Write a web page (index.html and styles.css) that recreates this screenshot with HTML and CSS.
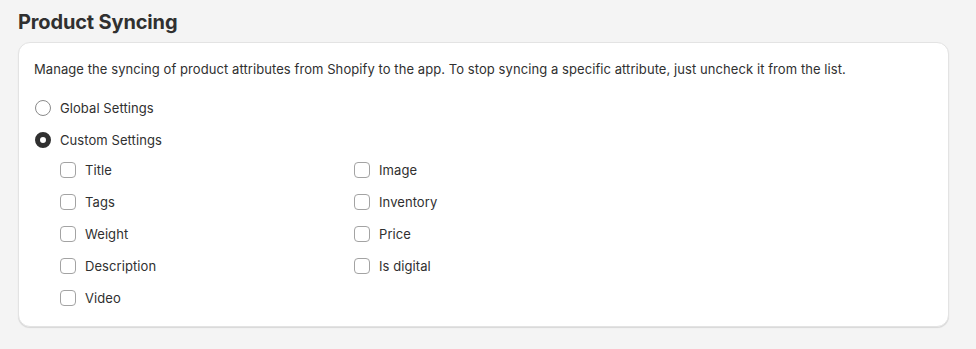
FILE: index.html
```html
<!DOCTYPE html>
<html lang="en">
<head>
    <meta charset="UTF-8">
    <meta name="viewport" content="width=device-width, initial-scale=1.0">
    <title>Product Syncing</title>
    <link rel="stylesheet" href="styles.css">
</head>
<body>
    <div class="page">
        <h2>Product Syncing</h2>
        <div class="card">
            <p class="intro">Manage the syncing of product attributes from Shopify to the app. To stop syncing a specific attribute, just uncheck it from the list.</p>
            <div class="choices">
                <label class="choice">
                    <input type="radio" name="mode" value="global">
                    <span>Global Settings</span>
                </label>
                <div class="custom">
                    <label class="choice">
                        <input type="radio" name="mode" value="custom" checked>
                        <span>Custom Settings</span>
                    </label>
                    <div class="attributes">
                        <label class="choice"><input type="checkbox" name="title"><span>Title</span></label>
                        <label class="choice"><input type="checkbox" name="image"><span>Image</span></label>
                        <label class="choice"><input type="checkbox" name="tags"><span>Tags</span></label>
                        <label class="choice"><input type="checkbox" name="inventory"><span>Inventory</span></label>
                        <label class="choice"><input type="checkbox" name="weight"><span>Weight</span></label>
                        <label class="choice"><input type="checkbox" name="price"><span>Price</span></label>
                        <label class="choice"><input type="checkbox" name="description"><span>Description</span></label>
                        <label class="choice"><input type="checkbox" name="digital"><span>Is digital</span></label>
                        <label class="choice"><input type="checkbox" name="video"><span>Video</span></label>
                    </div>
                </div>
            </div>
        </div>
    </div>
</body>
</html>
```

FILE: styles.css
```css
* {
    margin: 0;
    padding: 0;
    box-sizing: border-box;
    font-family: 'Inter', sans-serif;
}

body {
    background: #f4f4f4;
    color: #303030;
    font-size: 13px;
    letter-spacing: 0.075px;
}

.page {
    padding: 10px 27px 22px 18px;
}

h2 {
    font-size: 20px;
    line-height: 24px;
    font-weight: 700;
    letter-spacing: -0.15px;
    color: #303030;
    margin-bottom: 8px;
}

.card {
    background: white;
    border: 1px solid #e3e3e3;
    border-radius: 12px;
    box-shadow: 0 1px 1px rgba(0, 0, 0, 0.12);
    padding: 16px 16px 14px 15px;
}

.intro {
    line-height: 20px;
    margin-bottom: 15px;
}

.choices {
    display: flex;
    flex-direction: column;
    gap: 4px;
}

.choice {
    display: flex;
    align-items: center;
    gap: 9px;
    height: 28px;
    cursor: pointer;
    line-height: 20px;
}

.choice input {
    appearance: none;
    -webkit-appearance: none;
    width: 16px;
    height: 16px;
    margin: 0 0 0 1px;
    border: 1px solid #8a8a8a;
    background: white;
    flex-shrink: 0;
    cursor: pointer;
}

.choice input[type="radio"] {
    border-radius: 50%;
}

.choice input[type="radio"]:checked {
    border: 5px solid #303030;
}

.choice input[type="checkbox"] {
    border-radius: 4px;
    border-color: #a3a3a3;
}

.attributes {
    display: grid;
    grid-template-columns: 294px 294px;
    row-gap: 4px;
    padding-left: 25px;
    margin-top: 2px;
}
```
